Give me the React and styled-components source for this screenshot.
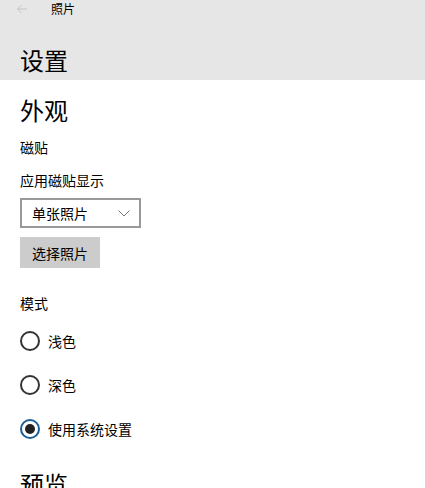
import React from "react";
import styled, { createGlobalStyle } from "styled-components";

const Global = createGlobalStyle`
  html, body { margin: 0; padding: 0; background: #fff; }
  body {
    font-family: "Noto Sans CJK SC", "Noto Sans", sans-serif;
    color: #000;
    overflow: hidden;
  }
`;

const Page = styled.div`
  width: 425px;
  height: 488px;
  overflow: hidden;
  display: flex;
  flex-direction: column;
`;

const Header = styled.header`
  background: #e6e6e6;
  height: 80px;
  flex-shrink: 0;
  box-sizing: border-box;
  padding: 0 20px;
  display: flex;
  flex-direction: column;
`;

const TitleBar = styled.div`
  height: 20px;
  display: flex;
  align-items: center;
  margin-left: -6px;
`;

const BackButton = styled.div`
  width: 16px;
  height: 16px;
  display: flex;
  align-items: center;
  justify-content: center;
  margin-right: 21px;
  margin-top: -2px;
`;

const AppName = styled.span`
  font-size: 12px;
  line-height: 16px;
  margin-top: -2px;
`;

const PageTitle = styled.h1`
  margin: 24px 0 0;
  font-size: 24px;
  line-height: 32px;
  font-weight: 400;
`;

const Content = styled.main`
  padding: 0 20px;
  display: flex;
  flex-direction: column;
  align-items: flex-start;
`;

const SectionTitle = styled.h2`
  margin: ${(p) => p.$top}px 0 0;
  font-size: 24px;
  line-height: 32px;
  font-weight: 400;
`;

const Label = styled.div`
  margin-top: ${(p) => p.$top}px;
  font-size: 14px;
  line-height: 20px;
`;

const Select = styled.div`
  margin-top: 8px;
  width: 121px;
  height: 30px;
  box-sizing: border-box;
  border: 2px solid #999;
  display: flex;
  align-items: center;
  justify-content: space-between;
  padding: 0 9px 0 10px;
  font-size: 14px;
`;

const Button = styled.div`
  margin-top: 9px;
  width: 80px;
  height: 31px;
  background: #cccccc;
  display: flex;
  align-items: center;
  justify-content: center;
  font-size: 14px;
`;

const RadioRow = styled.div`
  margin-top: ${(p) => p.$top}px;
  height: 20px;
  display: flex;
  align-items: center;
  font-size: 14px;
`;

const RadioCircle = styled.span`
  width: 20px;
  height: 20px;
  box-sizing: border-box;
  border-radius: 50%;
  border: 2px solid ${(p) => (p.$checked ? "#1c5f98" : "#333")};
  display: flex;
  align-items: center;
  justify-content: center;
  margin-right: 8px;
  &::after {
    content: "";
    display: ${(p) => (p.$checked ? "block" : "none")};
    width: 10px;
    height: 10px;
    border-radius: 50%;
    background: #222;
  }
`;

const Radio = ({ checked, top, children }) => (
  <RadioRow $top={top}>
    <RadioCircle $checked={checked} />
    {children}
  </RadioRow>
);

export default function App() {
  return (
    <Page>
      <Global />
      <Header>
        <TitleBar>
          <BackButton>
            <svg width="12" height="10" viewBox="0 0 12 10">
              <path d="M11 5H1.5M5.5 1L1.5 5l4 4" fill="none" stroke="#c4c4c4" strokeWidth="1" />
            </svg>
          </BackButton>
          <AppName>照片</AppName>
        </TitleBar>
        <PageTitle>设置</PageTitle>
      </Header>
      <Content>
        <SectionTitle $top={14}>外观</SectionTitle>
        <Label $top={11}>磁贴</Label>
        <Label $top={13}>应用磁贴显示</Label>
        <Select>
          <span>单张照片</span>
          <svg width="12" height="7" viewBox="0 0 12 7">
            <path d="M0.5 0.5L6 6l5.5-5.5" fill="none" stroke="#777" strokeWidth="1" />
          </svg>
        </Select>
        <Button>选择照片</Button>
        <Label $top={25}>模式</Label>
        <Radio top={18}>浅色</Radio>
        <Radio top={24}>深色</Radio>
        <Radio top={24} checked>使用系统设置</Radio>
        <SectionTitle $top={29}>预览</SectionTitle>
      </Content>
    </Page>
  );
}
